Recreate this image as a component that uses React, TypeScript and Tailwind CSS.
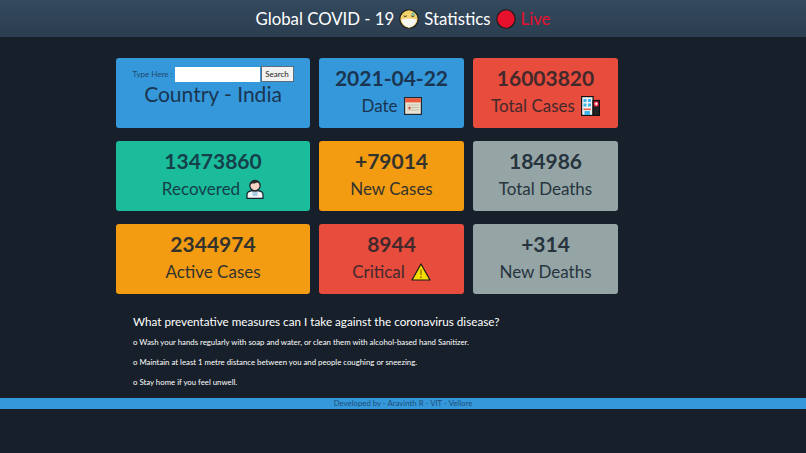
const FONT = "font-['Lato','Open_Sans',sans-serif]"

function MaskEmoji() {
  return (
    <svg viewBox="0 0 20 20" className="h-[20px] w-[20px]">
      <circle cx="10" cy="10" r="9.2" fill="#f2d06b" stroke="#1a1a1a" strokeWidth="1.1" />
      <path d="M4.6 6.8 q1.6 1.6 3.2 0 M12.2 6.8 q1.6 1.6 3.2 0" fill="none" stroke="#3a3a2a" strokeWidth="1" />
      <path d="M14 2.8 l1.4 2 a1.4 1.4 0 1 1 -2.6 0z" fill="#6fb7a8" />
      <path d="M2.4 10.5 q7.6 -2 15.2 0 q-.4 6 -7.6 8.2 q-7.2 -2.2 -7.6 -8.2z" fill="#f6f6f2" />
    </svg>
  )
}

function RedDot() {
  return (
    <svg viewBox="0 0 20 20" className="h-[20px] w-[20px]">
      <circle cx="10" cy="10" r="9.2" fill="#e8112d" stroke="#1a1a1a" strokeWidth="1.1" />
    </svg>
  )
}

function CalendarIcon() {
  return (
    <svg viewBox="0 0 18 18" className="h-[18px] w-[18px]">
      <rect x="0.6" y="0.6" width="16.8" height="16.8" fill="#e9e3d3" stroke="#1c2833" strokeWidth="1.2" />
      <rect x="1.2" y="1.2" width="15.6" height="4.2" fill="#ea5a3c" />
      <path d="M3 8h12M3 10.5h12M3 13h12" stroke="#c4bda9" strokeWidth="1" />
      <path d="M5.5 9.5v3M4 11h3" stroke="#d9534f" strokeWidth="1" />
    </svg>
  )
}

function HospitalIcon() {
  return (
    <svg viewBox="0 0 19 20" className="h-[20px] w-[19px]">
      <rect x="0.6" y="0.6" width="11.5" height="18.8" fill="#eef3f5" stroke="#111" strokeWidth="1.2" />
      <rect x="12" y="4.5" width="6.4" height="14.9" fill="#222" stroke="#111" strokeWidth="1.2" />
      <rect x="12.8" y="5.4" width="4.8" height="5" fill="#e8112d" />
      <path d="M15.2 6v3.8M13.4 7.9h3.6" stroke="#fff" strokeWidth="1" />
      <path d="M2.5 3h3v3h-3zM7 3h3v3h-3zM2.5 7.5h3v3h-3zM7 7.5h3v3h-3z" fill="#3fb4e8" />
      <rect x="2.5" y="12.5" width="7.5" height="1.6" fill="#e8604c" />
      <rect x="3.5" y="15" width="5.5" height="4" fill="#3fb4e8" />
    </svg>
  )
}

function DoctorIcon() {
  return (
    <svg viewBox="0 0 18 20" className="h-[20px] w-[18px]">
      <path d="M1 19.4v-3.5q0-3.4 4-4h8q4 .6 4 4v3.5z" fill="#f4f6f7" stroke="#17202a" strokeWidth="1.2" />
      <path d="M6.5 13h5v4h-5z" fill="#a9cce3" />
      <circle cx="9" cy="6.6" r="5.2" fill="#f3d3c4" stroke="#17202a" strokeWidth="1.2" />
      <path d="M3.8 7q-.2-5.8 5.2-5.8t5.2 5.8q-.8-2.8-2.6-3.4q-3 1.2-5.6 .8q-1.6 .6-2.2 2.6z" fill="#2c2c2c" />
    </svg>
  )
}

function WarningIcon() {
  return (
    <svg viewBox="0 0 20 18" className="h-[18px] w-[20px]">
      <path d="M10 1 L19 17 H1 Z" fill="#f7dc00" stroke="#1a1a1a" strokeWidth="1.2" strokeLinejoin="round" />
      <path d="M10 6.5v5.5" stroke="#a08400" strokeWidth="1.6" />
      <circle cx="10" cy="14.3" r="1" fill="#a08400" />
    </svg>
  )
}

type CardProps = {
  value: string
  label: string
  icon?: React.ReactNode
  bg: string
  text: string
}

function Card({ value, label, icon, bg, text }: CardProps) {
  return (
    <div className={`flex h-[70px] flex-col items-center rounded-[3px] pt-[7px] ${bg} ${text}`}>
      <div className="text-[21px] font-bold leading-[26px]">{value}</div>
      <div className="mt-[2px] flex h-[26px] items-center gap-[6px] text-[17px] leading-[26px]">
        {label}
        {icon}
      </div>
    </div>
  )
}

export default function App() {
  return (
    <div className={`${FONT} h-[453px] w-[806px] overflow-hidden bg-[#17202a]`}>
      <header className="flex h-[37px] items-center justify-center gap-[5px] bg-gradient-to-b from-[#34495e] to-[#2c3e50] text-[16.8px] text-white">
        <span>Global COVID - 19</span>
        <MaskEmoji />
        <span>Statistics</span>
        <RedDot />
        <span className="text-[#e8112d]">Live</span>
      </header>

      <main className="ml-[116px] mt-[21px] w-[502px]">
        <div className="grid grid-cols-[194px_145px_145px] gap-x-[9px] gap-y-[13px]">
          <div className="flex h-[70px] flex-col items-center rounded-[3px] bg-[#3498db] pt-[8px] text-[#1b3550]">
            <div className="flex items-center text-[8px] text-[#214a6b]">
              <span className="mr-[2px]">Type Here :</span>
              <input className="h-[15px] w-[85px] bg-white" />
              <button className="ml-[1px] h-[16px] w-[33px] border border-[#5d6d7e] bg-[#f2f2f2] text-[8px] leading-none text-[#222]">
                Search
              </button>
            </div>
            <div className="-mt-[1px] text-[21px] leading-[26px]">Country - India</div>
          </div>
          <Card value="2021-04-22" label="Date" icon={<CalendarIcon />} bg="bg-[#3498db]" text="text-[#1b3550]" />
          <Card value="16003820" label="Total Cases" icon={<HospitalIcon />} bg="bg-[#e74c3c]" text="text-[#43292c]" />
          <Card value="13473860" label="Recovered" icon={<DoctorIcon />} bg="bg-[#1abc9c]" text="text-[#15404a]" />
          <Card value="+79014" label="New Cases" bg="bg-[#f39c12]" text="text-[#33332e]" />
          <Card value="184986" label="Total Deaths" bg="bg-[#95a5a6]" text="text-[#27343e]" />
          <Card value="2344974" label="Active Cases" bg="bg-[#f39c12]" text="text-[#33332e]" />
          <Card value="8944" label="Critical" icon={<WarningIcon />} bg="bg-[#e74c3c]" text="text-[#43292c]" />
          <Card value="+314" label="New Deaths" bg="bg-[#95a5a6]" text="text-[#27343e]" />
        </div>

        <section className="ml-[17px] mt-[19px] text-white">
          <h2 className="text-[11.7px] leading-[16px]">What preventative measures can I take against the coronavirus disease?</h2>
          <p className="mt-[7px] text-[7.8px] leading-[12px]">o Wash your hands regularly with soap and water, or clean them with alcohol-based hand Sanitizer.</p>
          <p className="mt-[8px] text-[7.8px] leading-[12px]">o Maintain at least 1 metre distance between you and people coughing or sneezing.</p>
          <p className="mt-[8px] text-[7.8px] leading-[12px]">o Stay home if you feel unwell.</p>
        </section>
      </main>

      <footer className="mt-[10px] h-[11px] bg-[#3498db] text-center text-[7.8px] leading-[11px] text-[#1f4e78]">
        Developed by - Aravinth R - VIT - Vellore
      </footer>
    </div>
  )
}
